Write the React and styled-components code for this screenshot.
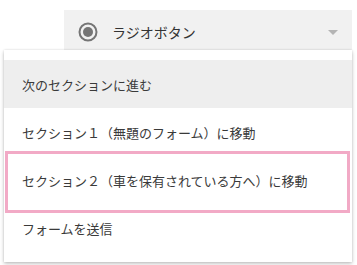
import React from 'react';
import styled, { createGlobalStyle } from 'styled-components';

const GlobalStyle = createGlobalStyle`
  html, body {
    margin: 0;
    padding: 0;
    background: #ffffff;
  }
  body {
    font-family: "Noto Sans CJK JP", "Noto Sans", sans-serif;
  }
`

const Page = styled.div`
  position: relative;
  width: 357px;
  height: 265px;
  overflow: hidden;
  background: #ffffff;
`
const Backdrop = styled.div`
  padding: 10px 5px 0 64px;
`
const Trigger = styled.div`
  display: flex;
  align-items: center;
  height: 44px;
  padding: 0 14px;
  background: #f1f1f1;
  gap: 14px;
  font-size: 14px;
  color: #333;
`
const Label = styled.span`
  flex: 1;
  line-height: 1;
`
const Arrow = styled.span`
  width: 0;
  height: 0;
  border-left: 5px solid transparent;
  border-right: 5px solid transparent;
  border-top: 5px solid #b4b4b4;
`
const Menu = styled.ul`
  position: absolute;
  left: 4px;
  top: 50px;
  width: 348px;
  margin: 0;
  padding: 10px 0;
  list-style: none;
  background: #ffffff;
  box-shadow: 0 2px 4px rgba(0, 0, 0, 0.22), 0 0 2px rgba(0, 0, 0, 0.12);
`
const MenuItem = styled.li`
  display: flex;
  align-items: center;
  height: 48px;
  padding: 0 18px;
  font-size: 13px;
  color: #3a3a3a;
  background: ${p => p.$active ? '#eeeeee' : 'transparent'};
  white-space: nowrap;
`
const Highlight = styled.div`
  position: absolute;
  left: 5px;
  top: 151px;
  width: 339px;
  height: 56px;
  border: 3px solid #f2aac6;
  pointer-events: none;
`

const RadioIcon = () => (
  <svg width="20" height="20" viewBox="0 0 20 20">
    <circle cx="10" cy="10" r="8.5" fill="none" stroke="#757575" strokeWidth="2" />
    <circle cx="10" cy="10" r="5" fill="#757575" />
  </svg>
)

const items = [
  '次のセクションに進む',
  'セクション１（無題のフォーム）に移動',
  'セクション２（車を保有されている方へ）に移動',
  'フォームを送信',
];

const App = () => {
  return (
    <Page>
      <GlobalStyle />
      <Backdrop>
        <Trigger>
          <RadioIcon />
          <Label>ラジオボタン</Label>
          <Arrow />
        </Trigger>
      </Backdrop>
      <Menu>
        {items.map((text, i) => (
          <MenuItem key={text} $active={i === 0}>{text}</MenuItem>
        ))}
      </Menu>
      <Highlight />
    </Page>
  )
}

export default App;
